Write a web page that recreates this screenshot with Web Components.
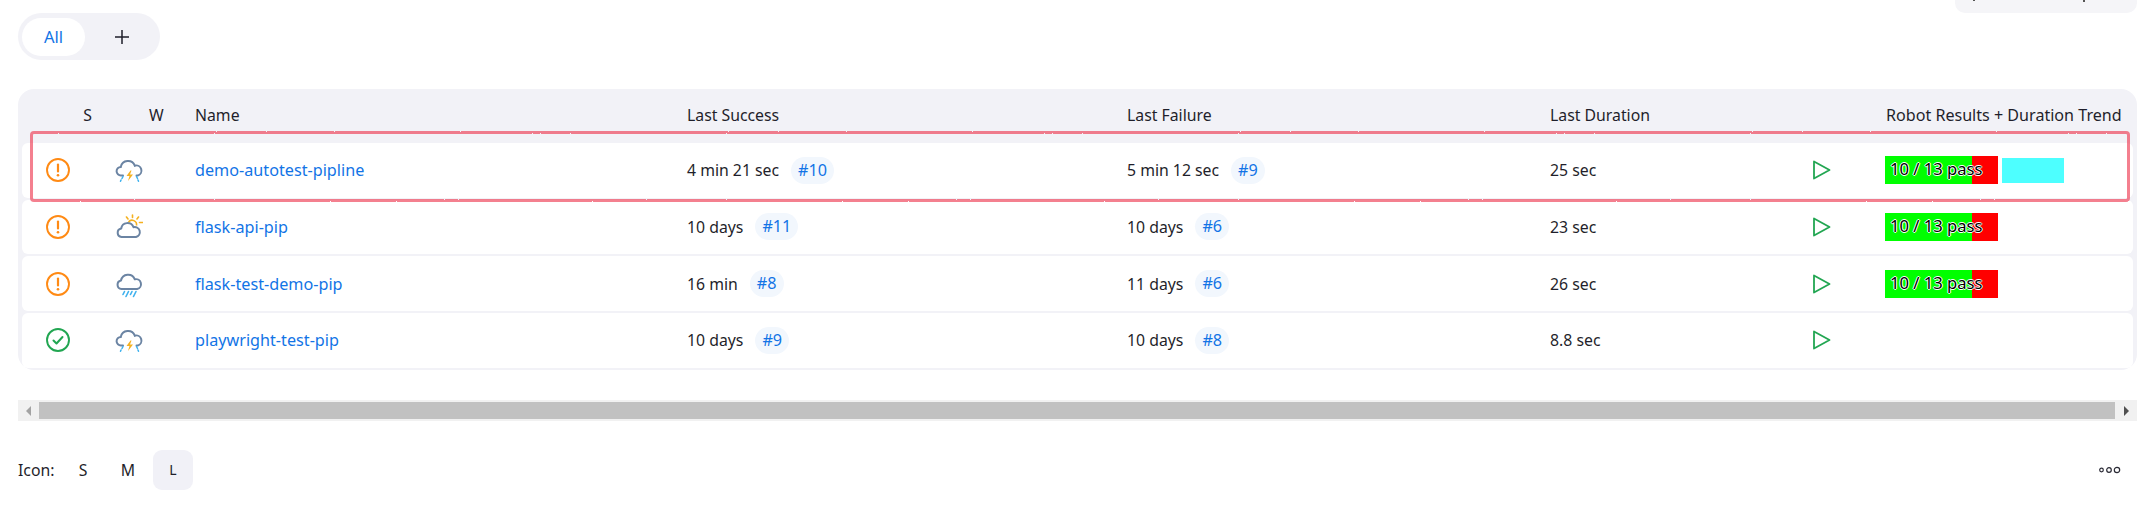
<!doctype html>
<html>
<head>
<meta charset="utf-8">
<title>Jobs</title>
<style>
  html, body { margin: 0; background: #fff; }
  body { width: 2153px; height: 505px; overflow: hidden; font-family: "Noto Sans", "Noto Sans CJK SC", sans-serif; font-size: 15.8px; color: #1f1f2b; }
</style>
</head>
<body>
<job-page>
  <job-table>
    <job-row status="warn" weather="storm" name="demo-autotest-pipline" success="4 min 21 sec" sbuild="#10" failure="5 min 12 sec" fbuild="#9" duration="25 sec" robot trend></job-row>
    <job-row status="warn" weather="sun" name="flask-api-pip" success="10 days" sbuild="#11" failure="10 days" fbuild="#6" duration="23 sec" robot></job-row>
    <job-row status="warn" weather="rain" name="flask-test-demo-pip" success="16 min" sbuild="#8" failure="11 days" fbuild="#6" duration="26 sec" robot></job-row>
    <job-row status="ok" weather="storm" name="playwright-test-pip" success="10 days" sbuild="#9" failure="10 days" fbuild="#8" duration="8.8 sec"></job-row>
  </job-table>
</job-page>
<script>
const COLUMNS = "72px 101px 492px 440px 423px 250px 85px 1fr";

const WEATHER = {
  storm: `<path d="M8 19.500h-2a4.300 4.300 0 0 1-.2-8.600 7.300 7.300 0 0 1 14-1.200 5 5 0 0 1 3 9.800h-1.300" fill="none" stroke="#6b84a3" stroke-width="2" stroke-linecap="round"/>
    <path d="M15.500 14.500l-4 5.500h3l-1.500 5 5-6.500h-3l1.500-4z" fill="#f5b120"/>
    <path d="M8 20.500l-1 2M6 24l-.5 1.200M21.500 20.500l1 2M23 24l.5 1.200" stroke="#3db1ee" stroke-width="1.500" stroke-linecap="round"/>`,
  sun: `<path d="M6.500 24a4.300 4.300 0 0 1-.3-8.500 6.400 6.400 0 0 1 12.300-1.300 4.900 4.900 0 0 1 2.500 9.800z" fill="none" stroke="#6b84a3" stroke-width="2" stroke-linejoin="round"/>
    <path d="M13.500 9a4.500 4.500 0 0 1 8 3.500" fill="none" stroke="#f5b120" stroke-width="1.600"/>
    <path d="M17.500 2v2.500M11.500 4l1.500 2M23.500 4l-1.500 2M24.500 9.500h3" stroke="#f5b120" stroke-width="1.600" stroke-linecap="round"/>`,
  rain: `<path d="M6.500 19a4.300 4.300 0 0 1-.5-8.500 7.200 7.200 0 0 1 13.800-1.200 4.900 4.900 0 0 1 2.400 9.700z" fill="none" stroke="#6b84a3" stroke-width="2" stroke-linejoin="round"/>
    <path d="M9.500 21.500l-1.500 3M13.500 21.500l-2.500 5M17 21.500l-1.500 3M21 21.500l-2.500 5" stroke="#3db1ee" stroke-width="1.600" stroke-linecap="round"/>`
};

class JobPage extends HTMLElement {
  constructor() {
    super();
    this.attachShadow({ mode: "open" });
    this.shadowRoot.innerHTML = `
      <style>
        :host { display: block; position: relative; height: 505px; padding: 0 16px 0 18px; box-sizing: border-box; }
        .top { display: flex; justify-content: space-between; align-items: flex-start; height: 89px; }
        .search { display: flex; align-items: flex-start; width: 182px; height: 13px; background: #f5f5f8; border-radius: 0 0 10px 10px; }
        .search i { display: block; width: 2px; background: #555; }
        .search i:first-child { height: 1px; margin-left: 18px; }
        .search i:last-child { height: 2px; margin-left: 108px; }
        .note { position: absolute; left: 30px; top: 131px; width: 2100px; height: 71px; box-sizing: border-box;
                border: 3px solid rgba(238, 50, 75, .62); border-radius: 4px; pointer-events: none; filter: url(#rough); }
      </style>
      <div class="top">
        <view-tabs></view-tabs>
        <div class="search"><i></i><i></i></div>
      </div>
      <slot></slot>
      <fake-scrollbar></fake-scrollbar>
      <icon-bar></icon-bar>
      <svg width="0" height="0" style="position:absolute">
        <filter id="rough" x="0" y="0" width="100%" height="100%">
          <feTurbulence type="fractalNoise" baseFrequency="0.5" numOctaves="2" seed="3"/>
          <feDisplacementMap in="SourceGraphic" scale="2"/>
        </filter>
      </svg>
      <div class="note"></div>
    `;
  }
}

class ViewTabs extends HTMLElement {
  constructor() {
    super();
    this.attachShadow({ mode: "open" });
    this.shadowRoot.innerHTML = `
      <style>
        :host { display: flex; align-items: center; width: 142px; height: 47px; margin-top: 13px; padding: 4px; box-sizing: border-box; background: #f2f2f7; border-radius: 24px; }
        .all { width: 63px; height: 38px; line-height: 38px; text-align: center; background: #fff; border-radius: 19px; color: #1274e6; font-size: 16.5px; }
        .add { flex: 1; display: flex; justify-content: center; padding-left: 2px; }
      </style>
      <div class="all">All</div>
      <div class="add">
        <svg width="16" height="16" viewBox="0 0 16 16"><path d="M8 1v14M1 8h14" stroke="#1f1f2b" stroke-width="1.500"/></svg>
      </div>
    `;
  }
}

class JobTable extends HTMLElement {
  constructor() {
    super();
    this.attachShadow({ mode: "open" });
    this.shadowRoot.innerHTML = `
      <style>
        :host { display: block; width: 2119px; height: 281px; box-sizing: border-box; padding: 0 4px 4px; background: #f2f2f7; border-radius: 16px; }
        .head { display: grid; grid-template-columns: ${COLUMNS}; height: 54px; box-sizing: border-box; padding-bottom: 2px; align-items: center; }
        .s { text-align: right; padding-right: 2px; }
        .w { padding-left: 55px; }
        .rows { display: flex; flex-direction: column; gap: 2px; }
        .trend { white-space: nowrap; font-size: 16.1px; margin-left: 1px; }
      </style>
      <div class="head">
        <div class="s">S</div><div class="w">W</div>
        <div>Name</div><div>Last Success</div><div>Last Failure</div>
        <div>Last Duration</div><div></div><div class="trend">Robot Results + Duration Trend</div>
      </div>
      <div class="rows"><slot></slot></div>
    `;
  }
}

class JobRow extends HTMLElement {
  constructor() {
    super();
    this.attachShadow({ mode: "open" });
  }

  connectedCallback() {
    const a = (n) => this.getAttribute(n) || "";
    const statusIcon = a("status") === "ok"
      ? `<circle cx="12" cy="12" r="11" fill="none" stroke="#22a652" stroke-width="1.900"/><path d="M7.500 12.500l3 3 6-6.500" fill="none" stroke="#22a652" stroke-width="2" stroke-linecap="round" stroke-linejoin="round"/>`
      : `<circle cx="12" cy="12" r="11" fill="none" stroke="#ff8a14" stroke-width="1.900"/><path d="M12 6.500v7" stroke="#ff8a14" stroke-width="2.200" stroke-linecap="round"/><circle cx="12" cy="17.300" r="1.300" fill="#ff8a14"/>`;
    this.shadowRoot.innerHTML = `
      <style>
        :host { display: grid; grid-template-columns: ${COLUMNS}; align-items: center; height: 54.67px; background: #fff; border-radius: 6px; }
        .st { display: flex; justify-content: center; }
        .we { display: flex; padding-left: 21px; }
        a { color: #1274e6; text-decoration: none; font-size: 16.2px; }
        .time { display: flex; align-items: center; gap: 12px; }
        .chip { padding: 0 7px; height: 27px; line-height: 27px; border-radius: 14px; background: #f2f7fd; color: #1274e6; font-size: 16.2px; }
        .play { display: flex; padding-left: 12px; }
        .robot { display: flex; align-items: center; gap: 4px; }
      </style>
      <div class="st"><svg width="24" height="24" viewBox="0 0 24 24">${statusIcon}</svg></div>
      <div class="we"><svg width="28" height="28" viewBox="0 0 28 28">${WEATHER[a("weather")]}</svg></div>
      <a>${a("name")}</a>
      <div class="time">${a("success")}<span class="chip">${a("sbuild")}</span></div>
      <div class="time">${a("failure")}<span class="chip">${a("fbuild")}</span></div>
      <div>${a("duration")}</div>
      <div class="play"><svg width="19" height="20" viewBox="0 0 19 20"><path d="M2 1.500l15.500 8.500-15.500 8.500z" fill="none" stroke="#22a652" stroke-width="1.800" stroke-linejoin="round"/></svg></div>
      <div class="robot">
        ${this.hasAttribute("robot") ? `<robot-badge></robot-badge>` : ""}
        ${this.hasAttribute("trend") ? `<div style="width:62px;height:25px;background:#4dffff"></div>` : ""}
      </div>
    `;
  }
}

class RobotBadge extends HTMLElement {
  constructor() {
    super();
    this.attachShadow({ mode: "open" });
    this.shadowRoot.innerHTML = `
      <style>
        :host { display: block; width: 113px; height: 28px; line-height: 26px; box-sizing: border-box; padding-left: 5px;
                background: linear-gradient(90deg, #0f0 87px, #f00 87px); font-size: 16.600px; color: #000; white-space: nowrap;
                text-shadow: 1px 0 #fff, -1px 0 #fff, 0 1px #fff, 0 -1px #fff; }
      </style>10 / 13 pass
    `;
  }
}

class FakeScrollbar extends HTMLElement {
  constructor() {
    super();
    this.attachShadow({ mode: "open" });
    this.shadowRoot.innerHTML = `
      <style>
        :host { display: grid; grid-template-columns: 21px 1fr 22px; align-items: center; width: 2119px; height: 21px; margin-top: 30px; background: #f1f1f1; }
        .thumb { height: 17px; background: #c1c1c1; }
        .end { display: flex; justify-content: center; }
      </style>
      <div class="end"><svg width="6" height="10" viewBox="0 0 6 10"><path d="M5 0v10L0 5z" fill="#a3a3a3"/></svg></div>
      <div class="thumb"></div>
      <div class="end"><svg width="6" height="10" viewBox="0 0 6 10"><path d="M1 0v10l5-5z" fill="#505050"/></svg></div>
    `;
  }
}

class IconBar extends HTMLElement {
  constructor() {
    super();
    this.attachShadow({ mode: "open" });
    this.shadowRoot.innerHTML = `
      <style>
        :host { display: flex; align-items: center; gap: 5px; width: 2119px; height: 40px; margin-top: 29px; }
        .label { width: 40px; }
        .size { width: 40px; height: 40px; line-height: 40px; text-align: center; border-radius: 9px; }
        .on { background: #f1f1f7; font-size: 14px; }
        .more { margin-left: auto; margin-right: 15px; display: flex; }
      </style>
      <div class="label">Icon:</div>
      <div class="size">S</div>
      <div class="size">M</div>
      <div class="size on">L</div>
      <div class="more"><svg width="24" height="8" viewBox="0 0 24 8">
        <g fill="none" stroke="#2a2a35" stroke-width="1.200"><circle cx="3.500" cy="4" r="1.800"/><circle cx="11" cy="4" r="2.300"/><circle cx="19" cy="4" r="2.700"/></g>
      </svg></div>
    `;
  }
}

customElements.define("job-page", JobPage);
customElements.define("view-tabs", ViewTabs);
customElements.define("job-table", JobTable);
customElements.define("job-row", JobRow);
customElements.define("robot-badge", RobotBadge);
customElements.define("fake-scrollbar", FakeScrollbar);
customElements.define("icon-bar", IconBar);
</script>
</body>
</html>
